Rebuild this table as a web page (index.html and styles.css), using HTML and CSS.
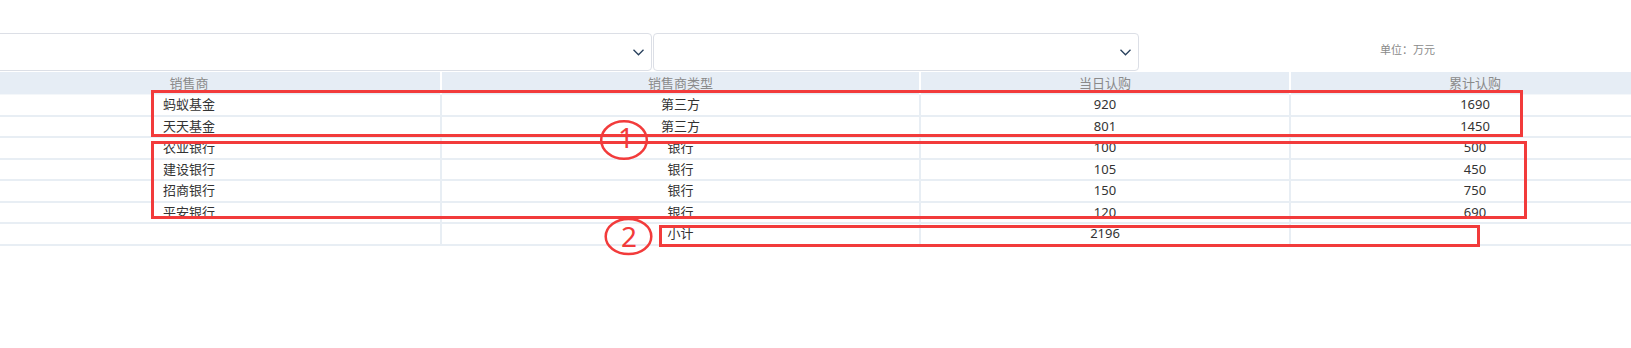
FILE: index.html
```html
<!DOCTYPE html>
<html lang="zh-CN">
<head>
<meta charset="utf-8">
<title>销售商认购</title>
<link rel="stylesheet" href="styles.css">
</head>
<body>
<div class="page">
  <div class="toolbar">
    <div class="select select-wide">
      <svg class="chevron" width="11" height="7" viewBox="0 0 11 7"><polyline points="0.5,0.8 5.5,5.8 10.5,0.8"/></svg>
    </div>
    <div class="select select-narrow">
      <svg class="chevron" width="11" height="7" viewBox="0 0 11 7"><polyline points="0.5,0.8 5.5,5.8 10.5,0.8"/></svg>
    </div>
    <div class="unit">单位：万元</div>
  </div>
  <div class="table">
    <div class="row head">
      <div class="cell">销售商</div>
      <div class="cell">销售商类型</div>
      <div class="cell">当日认购</div>
      <div class="cell">累计认购</div>
    </div>
    <div class="row">
      <div class="cell">蚂蚁基金</div>
      <div class="cell">第三方</div>
      <div class="cell">920</div>
      <div class="cell">1690</div>
    </div>
    <div class="row">
      <div class="cell">天天基金</div>
      <div class="cell">第三方</div>
      <div class="cell">801</div>
      <div class="cell">1450</div>
    </div>
    <div class="row">
      <div class="cell">农业银行</div>
      <div class="cell">银行</div>
      <div class="cell">100</div>
      <div class="cell">500</div>
    </div>
    <div class="row">
      <div class="cell">建设银行</div>
      <div class="cell">银行</div>
      <div class="cell">105</div>
      <div class="cell">450</div>
    </div>
    <div class="row">
      <div class="cell">招商银行</div>
      <div class="cell">银行</div>
      <div class="cell">150</div>
      <div class="cell">750</div>
    </div>
    <div class="row">
      <div class="cell">平安银行</div>
      <div class="cell">银行</div>
      <div class="cell">120</div>
      <div class="cell">690</div>
    </div>
    <div class="row">
      <div class="cell"></div>
      <div class="cell">小计</div>
      <div class="cell">2196</div>
      <div class="cell"></div>
    </div>
  </div>
</div>

<div class="annotations">
  <div class="box box-1"></div>
  <div class="box box-2"></div>
  <div class="box box-3"></div>
  <svg class="marks" width="1631" height="348" viewBox="0 0 1631 348">
    <ellipse cx="624" cy="140" rx="22.8" ry="18.8"/>
    <ellipse cx="628.5" cy="236.5" rx="22.8" ry="17.6"/>
    <text x="626" y="147.5">1</text>
    <text x="629" y="247">2</text>
  </svg>
</div>
</body>
</html>
```

FILE: styles.css
```css
html, body {
  margin: 0;
  padding: 0;
  background: #ffffff;
}

body {
  position: relative;
  width: 1631px;
  height: 348px;
  overflow: hidden;
  font-family: "Noto Sans", "Noto Sans CJK SC", sans-serif;
  font-size: 13px;
  color: #333333;
}

.page {
  margin-left: -62px;
  width: 1721px;
  padding-top: 33px;
}

/* ---- filter bar ---- */
.toolbar {
  display: flex;
  height: 38px;
  margin-bottom: 1px;
}

.select {
  box-sizing: border-box;
  height: 38px;
  border: 1px solid #dcdfe6;
  border-radius: 4px;
  display: flex;
  align-items: center;
  justify-content: flex-end;
  padding-right: 7px;
  background: #fff;
}

.select-wide {
  width: 714px;
}

.select-narrow {
  width: 486px;
  margin-left: 1px;
}

.chevron polyline {
  fill: none;
  stroke: #27405c;
  stroke-width: 1.3;
}

.unit {
  margin-left: 241px;
  padding-top: 8px;
  font-size: 11px;
  line-height: 16px;
  color: #8a8a8a;
  font-family: "Noto Sans CJK SC", sans-serif;
}

/* ---- table ---- */
.table {
  display: flex;
  flex-direction: column;
}

.row {
  display: grid;
  grid-template-columns: 502px 479px 370px 370px;
  box-sizing: border-box;
  height: 21.55px;
  border-bottom: 2px solid #e8eef4;
}

.row .cell {
  text-align: center;
  line-height: 19.55px;
  white-space: nowrap;
}

.row .cell + .cell {
  border-left: 2px solid #e8eef4;
}

.row.head {
  height: 23px;
  background: #e6edf5;
  border-bottom: 1px solid #f4f7fa;
}

.row.head .cell {
  line-height: 22px;
  color: #8a8a8a;
}

.row.head .cell + .cell {
  border-left: 2px solid #ffffff;
}

/* ---- red annotations over the table ---- */
.annotations {
  position: absolute;
  left: 0;
  top: 0;
  width: 1631px;
  height: 348px;
  pointer-events: none;
}

.box {
  position: absolute;
  box-sizing: border-box;
  border: 3px solid #f23b3b;
}

.box-1 {
  left: 151px;
  top: 90px;
  width: 1372px;
  height: 47px;
}

.box-2 {
  left: 151px;
  top: 141px;
  width: 1376px;
  height: 78px;
}

.box-3 {
  left: 659px;
  top: 225px;
  width: 821px;
  height: 22px;
}

.marks {
  position: absolute;
  left: 0;
  top: 0;
}

.marks ellipse {
  fill: none;
  stroke: #f23b3b;
  stroke-width: 2.5;
}

.marks text {
  fill: #f23b3b;
  font-family: "Noto Sans", "Liberation Sans", sans-serif;
  font-size: 28px;
  text-anchor: middle;
}
```
